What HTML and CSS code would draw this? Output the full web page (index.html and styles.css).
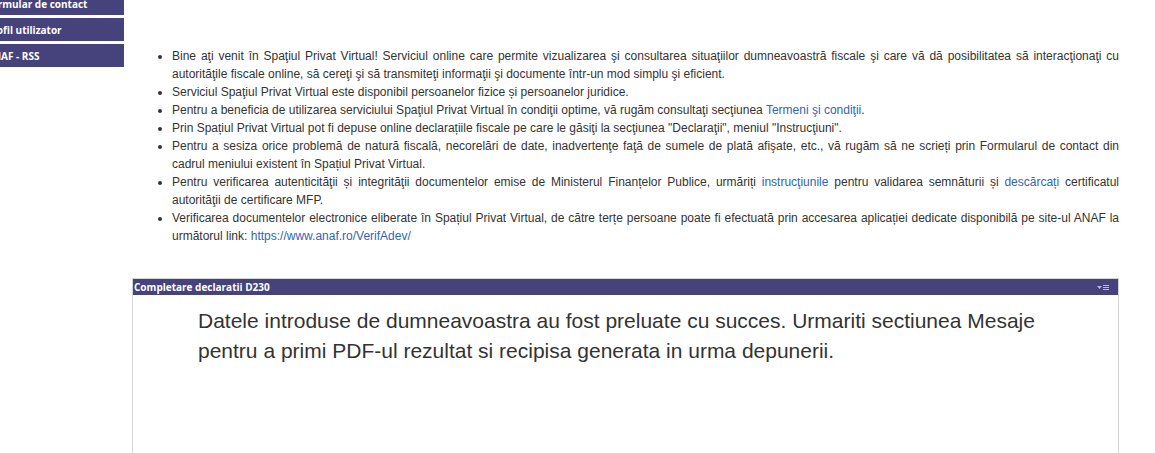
FILE: index.html
```html
<!DOCTYPE html>
<html>
<head>
  <meta charset="utf-8">
  <title>Spaţiul Privat Virtual</title>
  <link rel="stylesheet" href="styles.css">
</head>
<body>
  <div class="page">
    <nav class="sidebar">
      <a class="side-btn" href="#">Formular de contact</a>
      <a class="side-btn" href="#">Profil utilizator</a>
      <a class="side-btn" href="#">ANAF - RSS</a>
    </nav>

    <main class="content">
      <ul class="info">
        <li>Bine aţi venit în Spaţiul Privat Virtual! Serviciul online care permite vizualizarea şi consultarea situaţiilor dumneavoastră fiscale şi care vă dă posibilitatea să interacţionaţi cu autorităţile fiscale online, să cereţi şi să transmiteţi informaţii şi documente într-un mod simplu şi eficient.</li>
        <li>Serviciul Spaţiul Privat Virtual este disponibil persoanelor fizice și persoanelor juridice.</li>
        <li>Pentru a beneficia de utilizarea serviciului Spaţiul Privat Virtual în condiţii optime, vă rugăm consultaţi secţiunea <a href="#">Termeni şi condiţii</a>.</li>
        <li>Prin Spațiul Privat Virtual pot fi depuse online declarațiile fiscale pe care le găsiţi la secţiunea "Declaraţii", meniul "Instrucţiuni".</li>
        <li>Pentru a sesiza orice problemă de natură fiscală, necorelări de date, inadvertenţe faţă de sumele de plată afişate, etc., vă rugăm să ne scrieți prin Formularul de contact din cadrul meniului existent în Spațiul Privat Virtual.</li>
        <li>Pentru verificarea autenticităţii și integrităţii documentelor emise de Ministerul Finanțelor Publice, urmăriți <a href="#">instrucţiunile</a> pentru validarea semnăturii și <a href="#">descărcați</a> certificatul autorităţii de certificare MFP.</li>
        <li>Verificarea documentelor electronice eliberate în Spațiul Privat Virtual, de către terțe persoane poate fi efectuată prin accesarea aplicației dedicate disponibilă pe site-ul ANAF la următorul link: <a href="#">https://www.anaf.ro/VerifAdev/</a></li>
      </ul>

      <section class="panel">
        <div class="panel-head">
          <span class="panel-title">Completare declaratii D230</span>
          <svg class="panel-menu" width="12" height="6" viewBox="0 0 12 6">
            <path d="M0 1h5L2.5 4z" fill="#b9b7e0"/>
            <path d="M6 0.5h6M6 2.5h6M6 4.5h6" stroke="#b9b7e0" stroke-width="1"/>
          </svg>
        </div>
        <div class="panel-body">
          <p class="msg">Datele introduse de dumneavoastra au fost preluate cu succes. Urmariti sectiunea Mesaje pentru a primi PDF-ul rezultat si recipisa generata in urma depunerii.</p>
        </div>
      </section>
    </main>
  </div>
</body>
</html>
```

FILE: styles.css
```css
/* Page layout */
html, body {
  overflow: hidden;
}
body {
  margin: 0;
  background-color: #fff;
  font-family: "Liberation Sans", Arial, sans-serif;
  color: #333;
}
.page {
  display: flex;
  align-items: flex-start;
  margin-top: -8px;
}

/* Left menu */
.sidebar {
  display: flex;
  flex-direction: column;
  gap: 3px;
  width: 140px;
  margin-left: -16px;
  flex-shrink: 0;
}
.side-btn {
  display: flex;
  align-items: center;
  height: 23px;
  padding-left: 2px;
  background-color: #46437c;
  color: #fff;
  font-family: "Open Sans", "Noto Sans", sans-serif;
  font-weight: bold;
  font-size: 10px;
  text-decoration: none;
  white-space: nowrap;
}

/* Main area */
.content {
  flex: 1;
  margin-left: 8px;
  margin-right: 36px;
}
.info {
  margin: 55px 0 0;
  padding-left: 40px;
  font-size: 12px;
  line-height: 18px;
  text-align: justify;
}
.info a {
  color: #2f66b3;
  text-decoration: none;
}

/* Declaration panel */
.panel {
  margin-top: 33px;
  border: 1px solid #d4d4d4;
}
.panel-head {
  display: flex;
  align-items: center;
  justify-content: space-between;
  height: 16px;
  padding: 0 9px 0 1px;
  background-color: #46437c;
  color: #fff;
}
.panel-title {
  font-family: "Open Sans", "Noto Sans", sans-serif;
  font-weight: bold;
  font-size: 10px;
}
.panel-menu {
  margin-top: 2px;
}
.panel-body {
  height: 300px;
  padding: 11px 70px 0 65px;
}
.msg {
  margin: 0;
  font-size: 21px;
  line-height: 30px;
  color: #333;
}
```
